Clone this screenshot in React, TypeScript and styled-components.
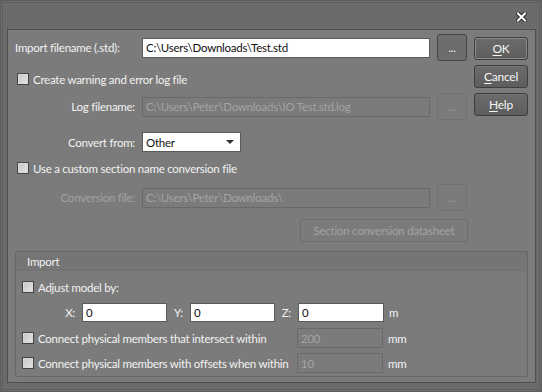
import React from "react";
import styled, { createGlobalStyle } from "styled-components";

const FONT = `"Lato", "Open Sans", sans-serif`;

const Global = createGlobalStyle`
  html, body { margin: 0; padding: 0; background: #6a6a6a; }
  body { font-family: ${FONT}; font-size: 11.5px; }
  * { box-sizing: border-box; }
`;

const Window = styled.div`
  width: 542px;
  height: 392px;
  background: #6b6b6b;
  border: 1px solid #5c5c5c;
  box-shadow: inset 0 0 0 1px #6d6d6d, inset 0 0 0 2px #606060;
  display: flex;
  flex-direction: column;
  color: #f2f2f2;
  font-family: ${FONT};
  font-size: 11.5px;
  letter-spacing: -0.25px;
`;

const TitleBar = styled.div`
  height: 28px;
  flex: none;
  display: flex;
  justify-content: flex-end;
  align-items: flex-start;
  padding: 11px 14px 0 0;
`;

const Panel = styled.div`
  flex: 1;
  margin: 0 5px 8px 6px;
  background: #7b7b7b;
  border: 1px solid #4f4f4f;
  padding: 4px 7px 0 7px;
  display: flex;
  flex-direction: column;
`;

const Top = styled.div`
  display: flex;
  gap: 6px;
`;

const Form = styled.div`
  flex: 1;
  display: flex;
  flex-direction: column;
`;

const Row = styled.div<{ $mt?: number; $h?: number }>`
  display: flex;
  align-items: center;
  height: ${(p) => p.$h ?? 27}px;
  margin-top: ${(p) => p.$mt ?? 0}px;
`;

const Label = styled.span<{ $disabled?: boolean; $right?: boolean }>`
  width: 127px;
  flex: none;
  padding-right: ${(p) => (p.$right ? 7 : 0)}px;
  text-align: ${(p) => (p.$right ? "right" : "left")};
  color: ${(p) => (p.$disabled ? "#a2a2a2" : "#f2f2f2")};
  white-space: nowrap;
`;

const Input = styled.div<{ $disabled?: boolean; $w?: number; $h?: number }>`
  width: ${(p) => p.$w ?? 288}px;
  height: ${(p) => p.$h ?? 20}px;
  flex: none;
  background: ${(p) => (p.$disabled ? "#7b7b7b" : "#ffffff")};
  border: 1px solid ${(p) => (p.$disabled ? "#696969" : "#5a5a5a")};
  color: ${(p) => (p.$disabled ? "#a4a4a4" : "#101010")};
  padding-left: 3px;
  display: flex;
  align-items: center;
  white-space: nowrap;
  overflow: hidden;
`;

const Browse = styled.div<{ $disabled?: boolean }>`
  width: 30px;
  height: 27px;
  margin-left: 7px;
  flex: none;
  border-radius: 3px;
  border: 1px solid ${(p) => (p.$disabled ? "#727272" : "#444444")};
  background: ${(p) => (p.$disabled ? "#7b7b7b" : "#6d6d6d")};
  color: ${(p) => (p.$disabled ? "#9c9c9c" : "#f2f2f2")};
  display: flex;
  align-items: center;
  justify-content: center;
  font-size: 11px;
`;

const Select = styled.div`
  width: 99px;
  height: 20px;
  background: #fff;
  border: 1px solid #5a5a5a;
  color: #101010;
  display: flex;
  align-items: center;
  justify-content: space-between;
  padding: 0 6px 0 3px;
`;

const Arrow = styled.span`
  width: 0;
  height: 0;
  border-left: 4px solid transparent;
  border-right: 4px solid transparent;
  border-top: 4px solid #333;
`;

const Check = styled.span<{ $ml?: number }>`
  width: 12px;
  height: 12px;
  flex: none;
  margin-left: ${(p) => p.$ml ?? 2}px;
  margin-right: 4px;
  border: 1px solid #444;
  background: linear-gradient(135deg, #c4c4c4, #e6e6e6);
  box-shadow: inset 0 0 0 1px #d9d9d9;
`;

const Buttons = styled.div`
  width: 54px;
  flex: none;
  display: flex;
  flex-direction: column;
  gap: 5px;
  padding-top: 3px;
`;

const DlgButton = styled.div<{ $default?: boolean }>`
  height: 23px;
  border-radius: 3px;
  border: 1px solid #3e3e3e;
  background: linear-gradient(#6b6b6b, #5d5d5d);
  box-shadow: ${(p) => (p.$default ? "inset 0 0 0 1px #8a8a8a" : "inset 0 1px 0 #747474")};
  display: flex;
  align-items: center;
  justify-content: center;
  color: #f4f4f4;
  font-size: 12px;
  u { text-decoration: underline; text-underline-offset: 2px; }
`;

const WideButton = styled.div`
  width: 168px;
  height: 23px;
  margin-left: auto;
  border-radius: 3px;
  border: 1px solid #6c6c6c;
  color: #a3a3a3;
  display: flex;
  align-items: center;
  justify-content: center;
`;

const Group = styled.div`
  margin-top: 10px;
  border: 1px solid #676767;
  border-radius: 2px;
  height: 126px;
  display: flex;
  flex-direction: column;
`;

const GroupHeader = styled.div`
  height: 19px;
  background: #757575;
  border-bottom: 1px solid #727272;
  padding-left: 11px;
  display: flex;
  align-items: center;
`;

const GroupBody = styled.div`
  padding: 10px 0 0 6px;
  display: flex;
  flex-direction: column;
`;

const CoordLabel = styled.span<{ $w: number }>`
  width: ${(p) => p.$w}px;
  text-align: right;
  padding-right: 7px;
  flex: none;
`;

const Unit = styled.span`
  margin-left: 5px;
`;

const CheckLabel = styled.span<{ $w?: number }>`
  white-space: nowrap;
  ${(p) => (p.$w ? `width: ${p.$w}px; flex: none;` : "")}
`;

function CloseIcon() {
  return (
    <svg width="11" height="10" viewBox="0 0 11 10">
      <path d="M2 1.5 L9 8.5 M9 1.5 L2 8.5" stroke="#2a2a2a" strokeWidth="4" strokeLinecap="square" />
      <path d="M2 1.5 L9 8.5 M9 1.5 L2 8.5" stroke="#ffffff" strokeWidth="2" strokeLinecap="square" />
    </svg>
  );
}

export default function App() {
  return (
    <>
      <Global />
      <Window>
        <TitleBar>
          <CloseIcon />
        </TitleBar>
        <Panel>
          <Top>
            <Form>
              <Row>
                <Label>Import filename (.std):</Label>
                <Input>C:\Users\Downloads\Test.std</Input>
                <Browse>...</Browse>
              </Row>
              <Row $mt={8} $h={20}>
                <Check />
                <CheckLabel>Create warning and error log file</CheckLabel>
              </Row>
              <Row $mt={4}>
                <Label $right>Log filename:</Label>
                <Input $disabled>C:\Users\Peter\Downloads\IO Test.std.log</Input>
                <Browse $disabled>...</Browse>
              </Row>
              <Row $mt={12} $h={20}>
                <Label $right>Convert from:</Label>
                <Select>
                  Other
                  <Arrow />
                </Select>
              </Row>
              <Row $mt={6} $h={20}>
                <Check />
                <CheckLabel>Use a custom section name conversion file</CheckLabel>
              </Row>
              <Row $mt={6}>
                <Label $right $disabled>Conversion file:</Label>
                <Input $disabled>C:\Users\Peter\Downloads\</Input>
                <Browse $disabled>...</Browse>
              </Row>
              <Row $mt={8} $h={22}>
                <WideButton>Section conversion datasheet</WideButton>
              </Row>
            </Form>
            <Buttons>
              <DlgButton $default>
                <span><u>O</u>K</span>
              </DlgButton>
              <DlgButton>
                <span><u>C</u>ancel</span>
              </DlgButton>
              <DlgButton>
                <span><u>H</u>elp</span>
              </DlgButton>
            </Buttons>
          </Top>
          <Group>
            <GroupHeader>Import</GroupHeader>
            <GroupBody>
              <Row $h={12}>
                <Check $ml={0} />
                <CheckLabel>Adjust model by:</CheckLabel>
              </Row>
              <Row $mt={10} $h={19}>
                <CoordLabel $w={60}>X:</CoordLabel>
                <Input $w={85} $h={19}>0</Input>
                <CoordLabel $w={23}>Y:</CoordLabel>
                <Input $w={85} $h={19}>0</Input>
                <CoordLabel $w={23}>Z:</CoordLabel>
                <Input $w={86} $h={19}>0</Input>
                <Unit>m</Unit>
              </Row>
              <Row $mt={6} $h={20}>
                <Check $ml={0} />
                <CheckLabel $w={259}>Connect physical members that intersect within</CheckLabel>
                <Input $disabled $w={86}>200</Input>
                <Unit>mm</Unit>
              </Row>
              <Row $mt={5} $h={20}>
                <Check $ml={0} />
                <CheckLabel $w={259}>Connect physical members with offsets when within</CheckLabel>
                <Input $disabled $w={86}>10</Input>
                <Unit>mm</Unit>
              </Row>
            </GroupBody>
          </Group>
        </Panel>
      </Window>
    </>
  );
}
